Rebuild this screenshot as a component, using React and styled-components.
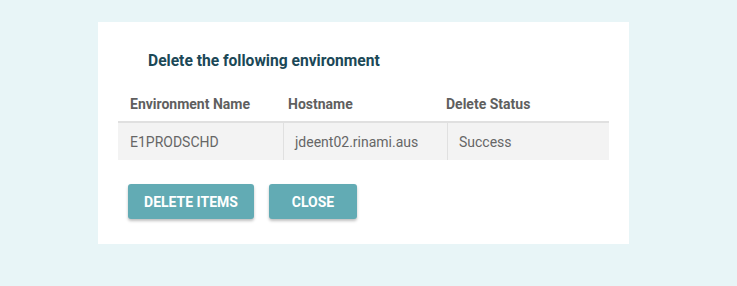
import React from "react";
import styled, { createGlobalStyle } from "styled-components";

const Global = createGlobalStyle`
  html, body { margin: 0; padding: 0; background: #e8f5f7; }
  body { font-family: Roboto, "Liberation Sans", sans-serif; }
`;

const Page = styled.div`
  width: 737px;
  height: 286px;
  padding: 22px 0 0 98px;
  box-sizing: border-box;
`;

const Card = styled.div`
  width: 531px;
  height: 222px;
  background: #fff;
  box-sizing: border-box;
  padding: 29px 20px 0 20px;
`;

const Title = styled.h3`
  margin: 0 0 0 30px;
  font-size: 15.6px;
  font-weight: 700;
  color: #1b4857;
  line-height: 20px;
`;

const Grid = styled.div`
  width: 491px;
  margin-top: 15px;
  font-size: 14px;
`;

const HeaderRow = styled.div`
  display: grid;
  grid-template-columns: 158px 158px 1fr;
  align-items: center;
  height: 35px;
  padding-left: 12px;
  border-bottom: 2px solid #e0e0e0;
`;

const HeaderCell = styled.div`
  font-weight: 700;
  color: #5f5f5f;
`;

const BodyRow = styled.div`
  display: grid;
  grid-template-columns: 165px 164px 1fr;
  height: 37px;
  background: #f3f3f3;
`;

const Cell = styled.div`
  display: flex;
  align-items: center;
  padding: 0 12px 0 ${(p) => (p.$first ? 12 : 11)}px;
  color: #666;
  border-left: ${(p) => (p.$first ? "none" : "1px solid #e0e0e0")};
`;

const Actions = styled.div`
  display: flex;
  gap: 15px;
  margin: 24px 0 0 10px;
`;

const Button = styled.button`
  height: 35px;
  width: ${(p) => p.$w}px;
  border: none;
  border-radius: 3px;
  background: #62abb4;
  color: #fff;
  font-family: Roboto, "Liberation Sans", sans-serif;
  font-weight: 700;
  font-size: 14px;
  text-transform: uppercase;
  box-shadow: 0 2px 3px rgba(0, 0, 0, 0.25);
  cursor: pointer;
  padding: 0;
`;

export default function App() {
  return (
    <Page>
      <Global />
      <Card>
        <Title>Delete the following environment</Title>
        <Grid>
          <HeaderRow>
            <HeaderCell>Environment Name</HeaderCell>
            <HeaderCell>Hostname</HeaderCell>
            <HeaderCell>Delete Status</HeaderCell>
          </HeaderRow>
          <BodyRow>
            <Cell $first>E1PRODSCHD</Cell>
            <Cell>jdeent02.rinami.aus</Cell>
            <Cell>Success</Cell>
          </BodyRow>
        </Grid>
        <Actions>
          <Button $w={126}>Delete Items</Button>
          <Button $w={88}>Close</Button>
        </Actions>
      </Card>
    </Page>
  );
}
